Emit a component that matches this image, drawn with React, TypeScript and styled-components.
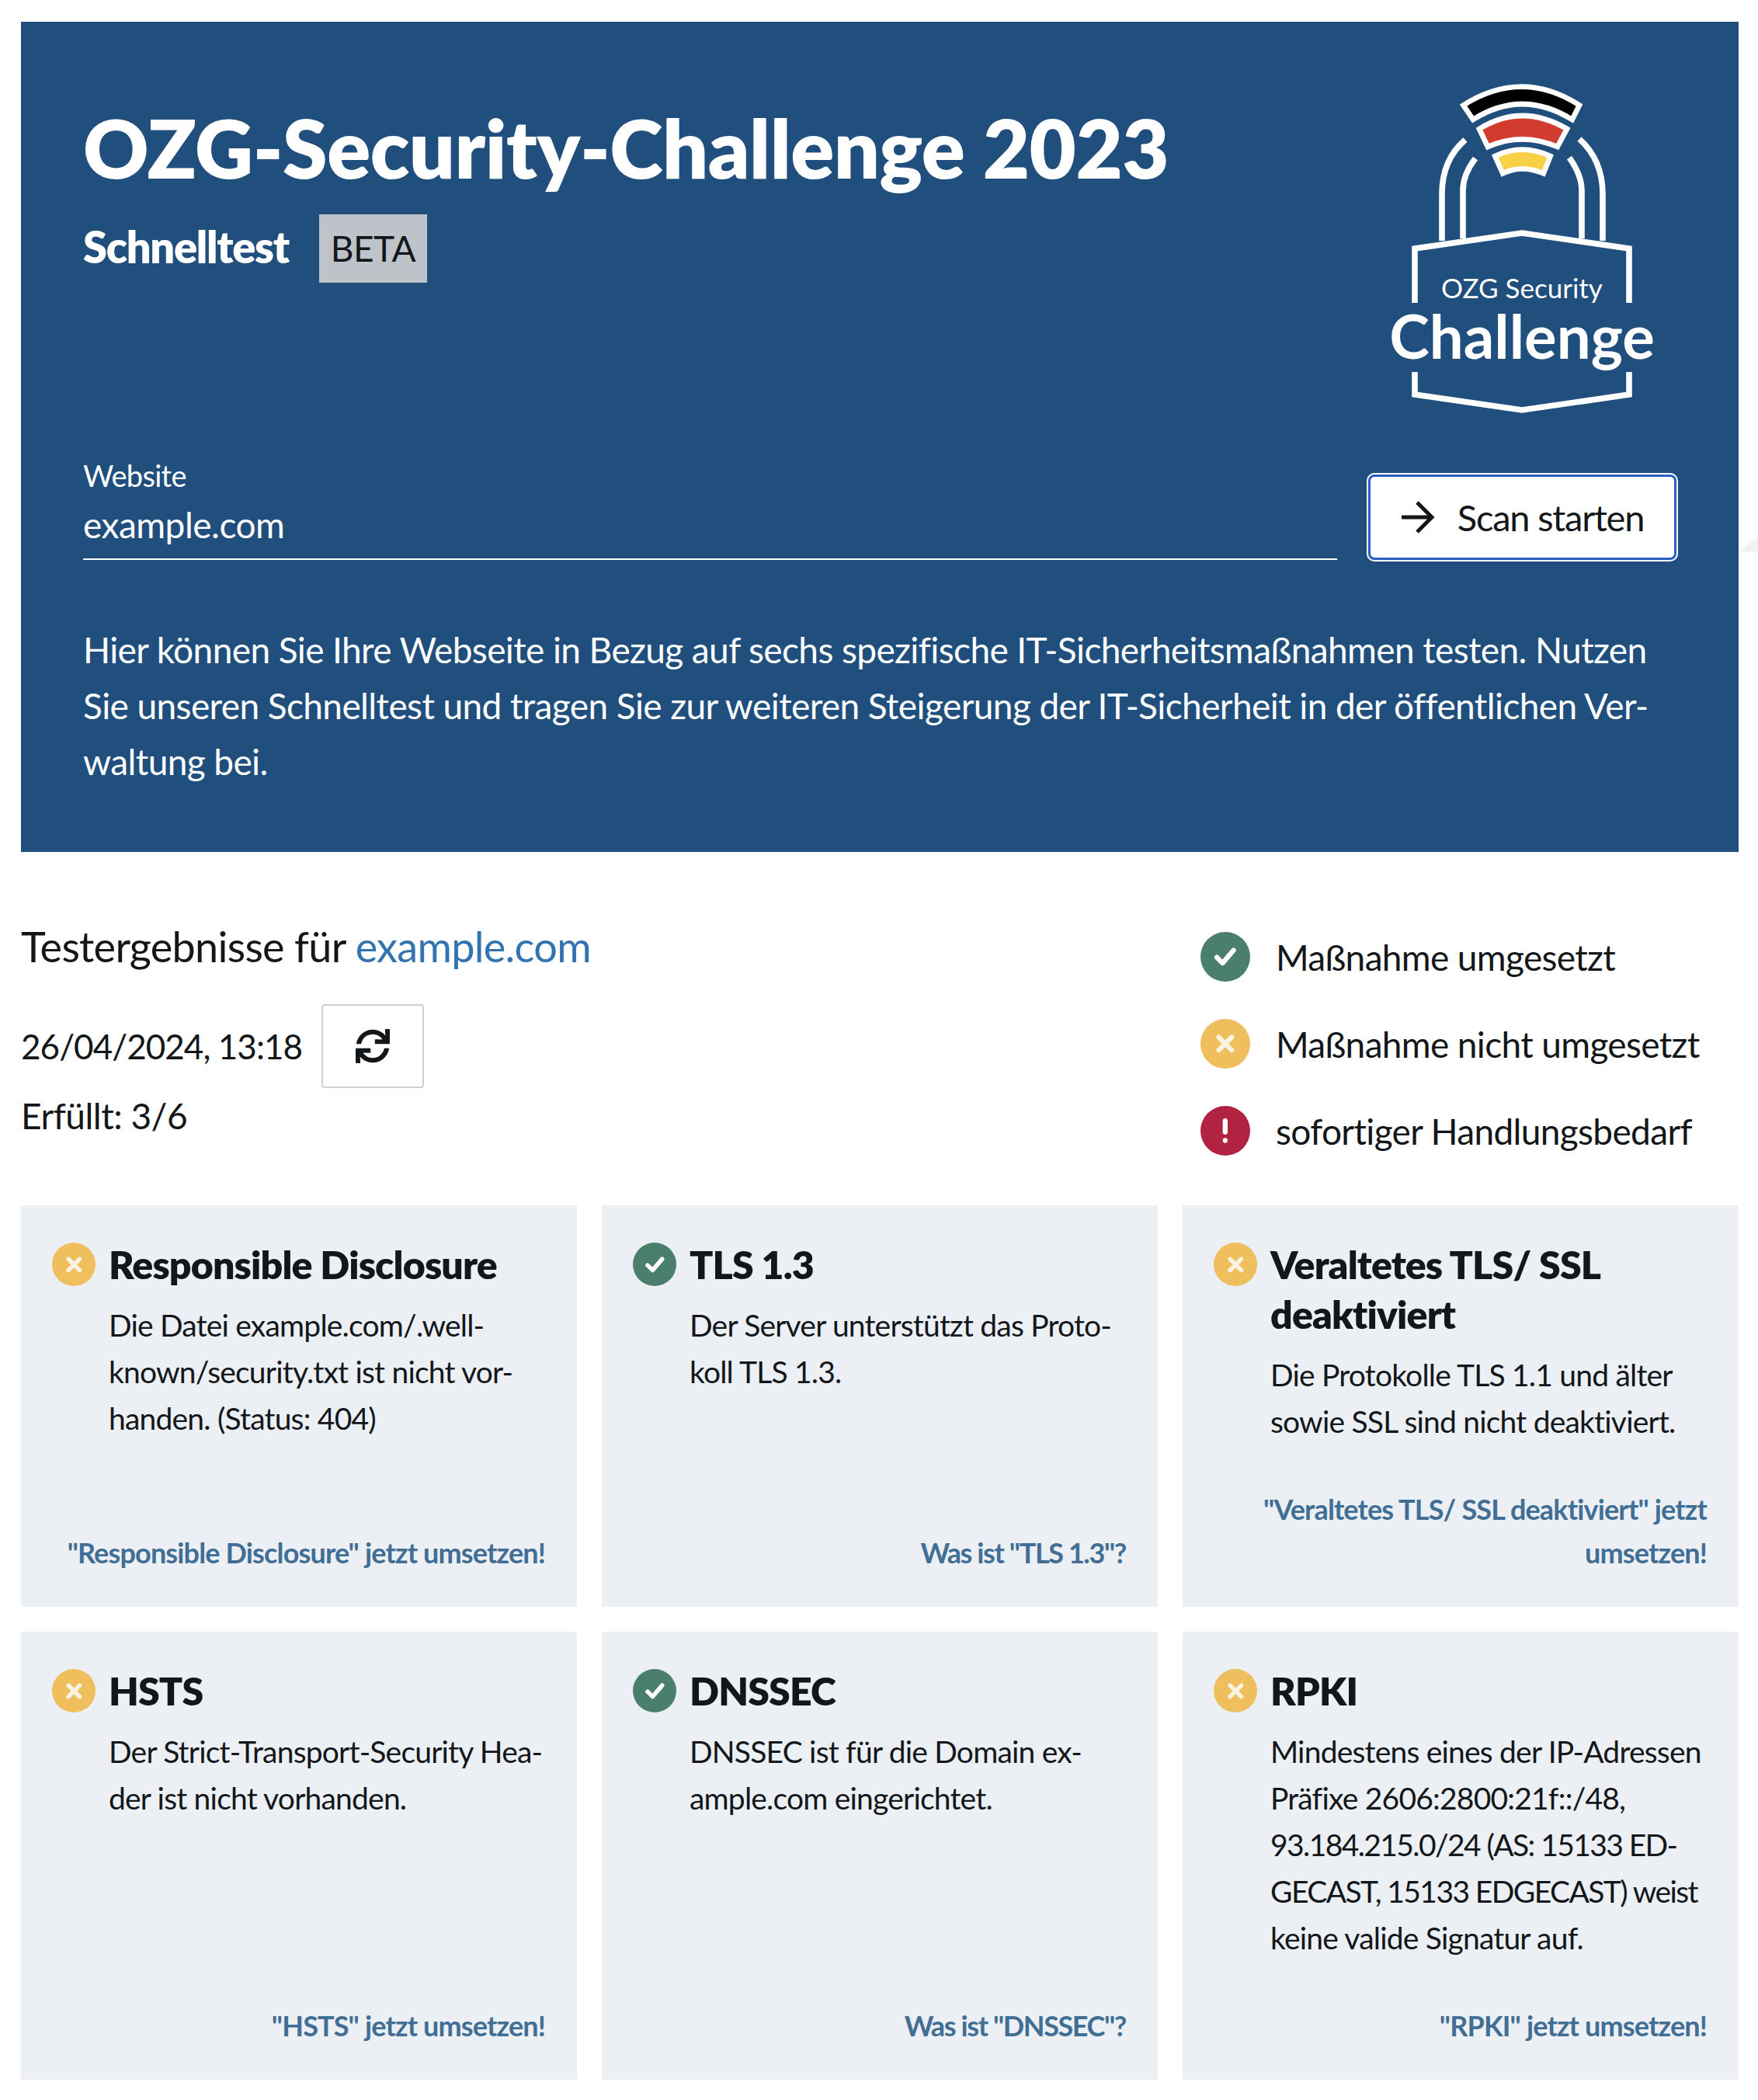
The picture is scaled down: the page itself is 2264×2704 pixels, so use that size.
import * as React from 'react'
import styled, { createGlobalStyle } from 'styled-components'
import { FaSync } from 'react-icons/fa'

const GlobalStyle = createGlobalStyle`
  html, body {
    margin: 0;
    padding: 0;
    background: #fff;
    color: #14171a;
    font-family: "Lato", "Noto Sans", sans-serif;
  }
`

const Page = styled.main`
  width: 2212px;
  padding: 28px 25px 26px 27px;
`

const EdgeNotch = styled.div`
  position: absolute;
  top: 690px;
  right: 0;
  width: 25px;
  height: 21px;
  background: #f2f2f2;
  clip-path: polygon(100% 0, 100% 100%, 0 100%);
`

const Hero = styled.section`
  background: #204e7d;
  color: #fff;
  padding: 77px 79px 80px 80px;
`

const HeroTop = styled.div`
  display: flex;
  justify-content: space-between;
  align-items: flex-start;
`

const HeroTitles = styled.div`
  padding-top: 25px;
`

const Title = styled.h1`
  margin: 0;
  font-size: 104px;
  line-height: 120px;
  font-weight: 800;
  letter-spacing: -0.5px;
`

const SubRow = styled.div`
  display: flex;
  align-items: center;
  gap: 39px;
  margin-top: 26px;
`

const Subtitle = styled.span`
  margin-bottom: 5px;
  font-size: 56px;
  font-weight: 800;
  letter-spacing: -1.3px;
`

const Badge = styled.span`
  display: flex;
  align-items: center;
  justify-content: center;
  box-sizing: border-box;
  width: 139px;
  height: 88px;
  padding-bottom: 2px;
  background: #bdc3c9;
  color: #14171a;
  font-size: 46px;
  letter-spacing: -0.5px;
`

const Logo = styled.svg`
  width: 340px;
  height: 430px;
  margin-right: 30px;
  flex: none;
`

const ScanForm = styled.form`
  display: flex;
  align-items: flex-end;
  gap: 39px;
  margin-top: 52px;
`

const Field = styled.label`
  flex: 1;
  display: block;
  border-bottom: 2px solid #fff;
  margin-bottom: 1px;
`

const FieldLabel = styled.span`
  display: block;
  font-size: 38px;
  line-height: 50px;
  letter-spacing: -0.7px;
`

const FieldValue = styled.span`
  display: block;
  padding-bottom: 4px;
  font-size: 46px;
  line-height: 78px;
  letter-spacing: -0.5px;
`

const ScanButton = styled.button`
  flex: none;
  display: flex;
  align-items: center;
  justify-content: center;
  gap: 29px;
  box-sizing: border-box;
  width: 399px;
  height: 112px;
  background: #fff;
  border: 4px solid #2a60c4;
  outline: 2px solid #fff;
  outline-offset: -1px;
  border-radius: 9px;
  color: #14171a;
  font-family: inherit;
  font-size: 47px;
  letter-spacing: -1.2px;
`

const Intro = styled.p`
  margin: 79px 0 0;
  font-size: 46px;
  line-height: 72px;
  letter-spacing: -0.6px;
  white-space: nowrap;
`

const ResultsHead = styled.section`
  display: flex;
  justify-content: space-between;
  align-items: flex-start;
  height: 455px;
`

const ResultsInfo = styled.div`
  padding-top: 87px;
`

const ResultsTitle = styled.h2`
  margin: 0;
  font-size: 54px;
  line-height: 70px;
  font-weight: 400;
  letter-spacing: -0.7px;
`

const DomainLink = styled.a`
  color: #3373af;
  text-decoration: none;
`

const DateRow = styled.div`
  display: flex;
  align-items: center;
  gap: 25px;
  margin-top: 39px;
  font-size: 44px;
  letter-spacing: -0.95px;
`

const RefreshButton = styled.button`
  display: flex;
  align-items: center;
  justify-content: center;
  box-sizing: border-box;
  width: 132px;
  height: 108px;
  background: #fff;
  border: 2px solid #ccd1d6;
  border-radius: 4px;
  color: #14171a;
  font-size: 44px;
`

const Score = styled.div`
  margin-top: 6px;
  font-size: 46px;
  line-height: 60px;
  letter-spacing: -0.5px;
`

const Legend = styled.ul`
  list-style: none;
  margin: 103px 0 0;
  padding: 0;
  width: 693px;
  display: flex;
  flex-direction: column;
  gap: 48px;
`

const LegendItem = styled.li`
  display: flex;
  align-items: center;
  gap: 33px;
  font-size: 46px;
  letter-spacing: -0.65px;
`

const Grid = styled.section`
  display: grid;
  grid-template-columns: repeat(3, minmax(0, 1fr));
  grid-template-rows: 517px 577px;
  gap: 32px;
`

const Card = styled.article`
  display: flex;
  flex-direction: column;
  background: #eceff4;
  padding: 44px 41px 42px 40px;
`

const CardMain = styled.div`
  display: flex;
  gap: 17px;
`

const CardBody = styled.div`
  flex: 1;
  white-space: nowrap;
`

const CardTitle = styled.h3`
  margin: 0;
  font-size: 50px;
  line-height: 64px;
  font-weight: 800;
  letter-spacing: -0.85px;
`

const CardText = styled.p`
  margin: 16px 0 0;
  font-size: 39px;
  line-height: 60px;
  letter-spacing: -0.8px;
`

// the address lines run narrower in the original font
const TightLine = styled.span`
  letter-spacing: -1.6px;
`

const CardLink = styled.a<{ $tight?: boolean }>`
  margin-top: auto;
  text-align: right;
  white-space: nowrap;
  color: #416e94;
  font-size: 36px;
  line-height: 56px;
  font-weight: 700;
  letter-spacing: ${(p) => (p.$tight ? '-1.4px' : '-0.85px')};
  text-decoration: none;
`

const TONES = {
  ok: '#4a7f6c',
  warn: '#efbe5d',
  bad: '#b12340',
}

type Tone = keyof typeof TONES

const Circle = styled.span<{ $tone: Tone; $size: number; $drop?: number }>`
  flex: none;
  display: flex;
  align-items: center;
  justify-content: center;
  width: ${(p) => p.$size}px;
  height: ${(p) => p.$size}px;
  margin-top: ${(p) => p.$drop ?? 0}px;
  border-radius: 50%;
  background: ${(p) => TONES[p.$tone]};
  svg {
    width: 62%;
    height: 62%;
  }
`

function StatusIcon({ tone, size, drop }: { tone: Tone; size: number; drop?: number }) {
  return (
    <Circle $tone={tone} $size={size} $drop={drop}>
      <svg viewBox="0 0 24 24" fill="none" stroke={tone === 'warn' ? '#fbf3e2' : '#fff'} strokeWidth="3.8" strokeLinecap="round" strokeLinejoin="round">
        {tone === 'ok' && <path d="M5.500 12.500 10 17 18.500 7" />}
        {tone === 'warn' && <path d="M7 7 17 17M17 7 7 17" />}
        {tone === 'bad' && (
          <>
            <path d="M12 4.300V13.200" />
            <path d="M12 19.600V19.700" />
          </>
        )}
      </svg>
    </Circle>
  )
}

function LockLogo() {
  return (
    <Logo viewBox="50 25 340 430" aria-label="OZG Security Challenge">
      <g fill="none" stroke="#fff" strokeWidth="7.6" strokeMiterlimit="10">
        <path d="M147 100C126 118 117 142 117 170V230" />
        <path d="M294 99C315 118 324 142 324 170V230" />
        <path d="M160 124C150 137 144 150 144 165V227" />
        <path d="M281 123C291 137 297 150 297 165V227" />
        <path d="M82 310V240L220 220 358 240V310" />
        <path d="M82 399V428L220 448 358 428V399" />
      </g>
      <g stroke="#fff" strokeWidth="6.7" strokeLinejoin="miter">
        <path d="M144.500 55.500Q220 7.900 294 55.500L284.700 74Q220 34 157 74Z" fill="#000" />
        <path d="M165 86Q220 52 278 86L265.700 109Q220 89.600 176 109Z" fill="#d13c2e" />
        <path d="M185.300 121Q220 104.400 256.700 121L247.700 143.300Q220 131.300 195.300 143.300Z" fill="#f9d045" />
      </g>
      <text x="220" y="304" textAnchor="middle" fill="#fff" fontSize="35" fontFamily="Lato, sans-serif">OZG Security</text>
      <text x="220" y="382" textAnchor="middle" fill="#fff" fontSize="78" fontWeight="700" fontFamily="Lato, sans-serif">Challenge</text>
    </Logo>
  )
}

function ArrowIcon() {
  return (
    <svg width="44" height="42" viewBox="0 0 44 42" fill="none" stroke="#14171a" strokeWidth="5">
      <path d="M1 21H40" />
      <path d="M21 2 40 21 21 40" />
    </svg>
  )
}

const CARDS: { tone: Tone; title: React.ReactNode; text: React.ReactNode; link: React.ReactNode; tightLink?: boolean }[] = [
  {
    tone: 'warn',
    title: 'Responsible Disclosure',
    text: <>Die Datei example.com/.well-<br />known/security.txt ist nicht vor-<br />handen. (Status: 404)</>,
    link: '"Responsible Disclosure" jetzt umsetzen!',
  },
  {
    tone: 'ok',
    title: 'TLS 1.3',
    text: <>Der Server unterstützt das Proto-<br />koll TLS 1.3.</>,
    link: 'Was ist "TLS 1.3"?',
    tightLink: true,
  },
  {
    tone: 'warn',
    title: <>Veraltetes TLS/ SSL<br />deaktiviert</>,
    text: <>Die Protokolle TLS 1.1 und älter<br />sowie SSL sind nicht deaktiviert.</>,
    link: <>"Veraltetes TLS/ SSL deaktiviert" jetzt<br />umsetzen!</>,
  },
  {
    tone: 'warn',
    title: 'HSTS',
    text: <>Der Strict-Transport-Security Hea-<br />der ist nicht vorhanden.</>,
    link: '"HSTS" jetzt umsetzen!',
  },
  {
    tone: 'ok',
    title: 'DNSSEC',
    text: <>DNSSEC ist für die Domain ex-<br />ample.com eingerichtet.</>,
    link: 'Was ist "DNSSEC"?',
    tightLink: true,
  },
  {
    tone: 'warn',
    title: 'RPKI',
    text: (
      <>
        Mindestens eines der IP-Adressen<br />
        Präfixe 2606:2800:21f::/48,<br />
        <TightLine>93.184.215.0/24 (AS: 15133 ED-</TightLine><br />
        <TightLine>GECAST, 15133 EDGECAST) weist</TightLine><br />
        keine valide Signatur auf.
      </>
    ),
    link: '"RPKI" jetzt umsetzen!',
  },
]

export default function App() {
  return (
    <Page>
      <GlobalStyle />
      <EdgeNotch />
      <Hero>
        <HeroTop>
          <HeroTitles>
            <Title>OZG-Security-Challenge 2023</Title>
            <SubRow>
              <Subtitle>Schnelltest</Subtitle>
              <Badge>BETA</Badge>
            </SubRow>
          </HeroTitles>
          <LockLogo />
        </HeroTop>
        <ScanForm>
          <Field>
            <FieldLabel>Website</FieldLabel>
            <FieldValue>example.com</FieldValue>
          </Field>
          <ScanButton type="button">
            <ArrowIcon />
            Scan starten
          </ScanButton>
        </ScanForm>
        <Intro>
          Hier können Sie Ihre Webseite in Bezug auf sechs spezifische IT-Sicherheitsmaßnahmen testen. Nutzen<br />
          Sie unseren Schnelltest und tragen Sie zur weiteren Steigerung der IT-Sicherheit in der öffentlichen Ver-<br />
          waltung bei.
        </Intro>
      </Hero>
      <ResultsHead>
        <ResultsInfo>
          <ResultsTitle>
            Testergebnisse für <DomainLink href="#">example.com</DomainLink>
          </ResultsTitle>
          <DateRow>
            26/04/2024, 13:18
            <RefreshButton type="button" aria-label="Neu laden">
              <FaSync />
            </RefreshButton>
          </DateRow>
          <Score>Erfüllt: 3/6</Score>
        </ResultsInfo>
        <Legend>
          <LegendItem><StatusIcon tone="ok" size={64} />Maßnahme umgesetzt</LegendItem>
          <LegendItem><StatusIcon tone="warn" size={64} />Maßnahme nicht umgesetzt</LegendItem>
          <LegendItem><StatusIcon tone="bad" size={64} />sofortiger Handlungsbedarf</LegendItem>
        </Legend>
      </ResultsHead>
      <Grid>
        {CARDS.map((card, i) => (
          <Card key={i}>
            <CardMain>
              <StatusIcon tone={card.tone} size={56} drop={4} />
              <CardBody>
                <CardTitle>{card.title}</CardTitle>
                <CardText>{card.text}</CardText>
              </CardBody>
            </CardMain>
            <CardLink href="#" $tight={card.tightLink}>{card.link}</CardLink>
          </Card>
        ))}
      </Grid>
    </Page>
  )
}
